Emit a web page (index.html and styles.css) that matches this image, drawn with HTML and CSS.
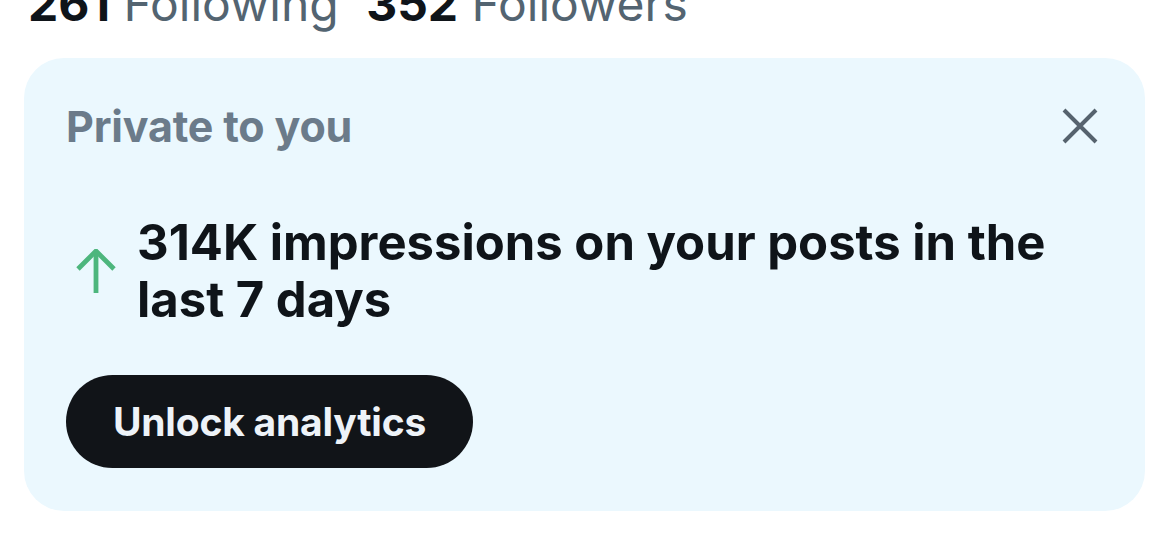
FILE: index.html
```html
<!DOCTYPE html>
<html lang="en">
<head>
<meta charset="utf-8">
<title>Private to you</title>
<link rel="stylesheet" href="styles.css">
</head>
<body>
<div class="stats">
  <span class="num">261</span> <span class="lbl">Following</span>
  <span class="num gap">352</span> <span class="lbl">Followers</span>
</div>
<section class="card">
  <div class="card-head">
    <h2 class="private">Private to you</h2>
    <button class="close" aria-label="Close">
      <svg width="36" height="36" viewBox="0 0 36 36" fill="none" stroke="#56636e" stroke-width="4" stroke-linecap="butt">
        <path d="M2 2 L34 34 M34 2 L2 34"/>
      </svg>
    </button>
  </div>
  <div class="metric">
    <svg class="arrow" width="40" height="44" viewBox="0 0 40 44" fill="none" stroke="#4db67d" stroke-width="4.8">
      <path d="M20 2 L20 44"/>
      <path d="M2 20 L20 2 L38 20"/>
    </svg>
    <p class="metric-text">314K impressions on your posts in the last 7 days</p>
  </div>
  <button class="unlock">Unlock analytics</button>
</section>
</body>
</html>
```

FILE: styles.css
```css
html, body {
  margin: 0;
  padding: 0;
  background: #ffffff;
  font-family: Inter, "Noto Sans", "Liberation Sans", sans-serif;
  width: 1170px;
  height: 554px;
  overflow: hidden;
}

.stats {
  margin-top: -20px;
  padding-left: 28px;
  height: 48px;
  line-height: 48px;
  font-size: 48px;
  white-space: nowrap;
}

.num {
  font-weight: 700;
  color: #0f1419;
}

.num.gap {
  margin-left: 14px;
}

.lbl {
  color: #536471;
  font-weight: 400;
}

.card {
  margin: 30px 25px 0 24px;
  height: 453px;
  box-sizing: border-box;
  background: #ebf8fe;
  border-radius: 40px;
  padding: 44px 47px 43px 42px;
  display: flex;
  flex-direction: column;
}

.card-head {
  display: flex;
  justify-content: space-between;
  align-items: center;
  height: 48px;
}

.private {
  margin: 0;
  font-size: 43px;
  line-height: 48px;
  font-weight: 700;
  color: #6b7b8a;
  letter-spacing: -0.2px;
}

.close {
  border: 0;
  background: none;
  padding: 0;
  width: 36px;
  height: 36px;
  display: flex;
}

.metric {
  margin-top: 64px;
  display: flex;
  align-items: flex-start;
}

.arrow {
  flex: none;
  margin-left: 10px;
  margin-top: 35px;
  margin-right: 21px;
}

.metric-text {
  margin: 0;
  font-size: 49px;
  line-height: 57px;
  font-weight: 700;
  color: #0f1419;
  width: 960px;
  letter-spacing: 0;
}

.unlock {
  margin-top: 47px;
  align-self: flex-start;
  height: 93px;
  width: 407px;
  border: 0;
  border-radius: 47px;
  background: #111418;
  color: #eef3f8;
  font-family: Inter, "Noto Sans", "Liberation Sans", sans-serif;
  font-size: 39px;
  font-weight: 700;
  letter-spacing: -0.2px;
  padding: 0;
}
```
